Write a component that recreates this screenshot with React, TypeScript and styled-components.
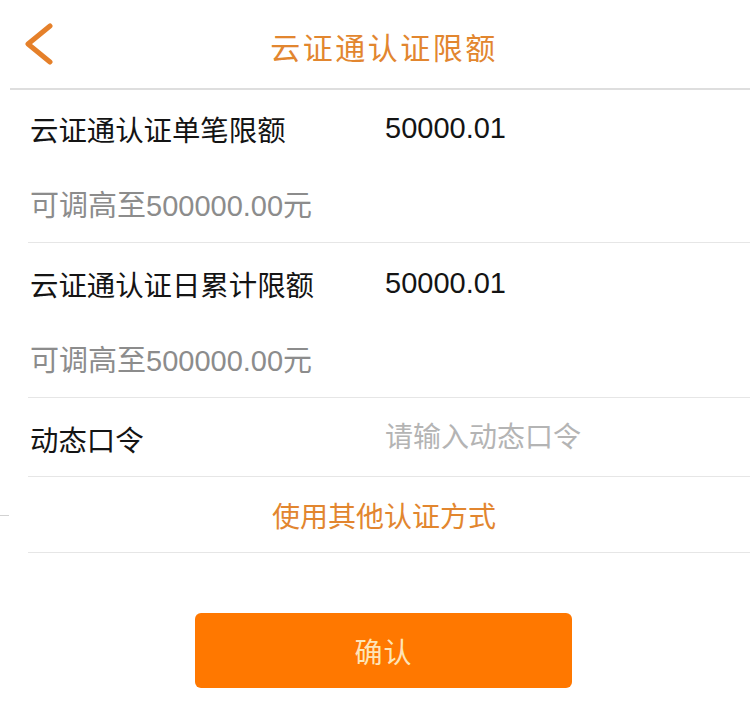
import React from "react";
import styled, { createGlobalStyle } from "styled-components";

const GlobalStyle = createGlobalStyle`
  html, body {
    margin: 0;
    padding: 0;
    background: #ffffff;
  }
  body {
    font-family: "Liberation Sans", "Noto Sans CJK SC", sans-serif;
    -webkit-font-smoothing: antialiased;
  }
  * { box-sizing: border-box; }
`;

const Page = styled.div`
  width: 750px;
  min-height: 716px;
  background: #ffffff;
  display: flex;
  flex-direction: column;
`;

const Header = styled.header`
  margin-left: 10px;
  height: 90px;
  border-bottom: 2px solid #dedede;
  display: grid;
  grid-template-columns: 78px 1fr 70px;
  align-items: center;
`;

const BackButton = styled.button`
  border: none;
  background: none;
  padding: 0 0 0 15px;
  margin: 0;
  display: flex;
  align-items: center;
  height: 100%;
  cursor: pointer;
`;

const Title = styled.h1`
  margin: 0;
  padding-top: 3px;
  text-align: center;
  font-family: "Noto Sans CJK SC", sans-serif;
  font-weight: 400;
  font-size: 30px;
  letter-spacing: 2.5px;
  color: #e2862f;
`;

const LimitSection = styled.section<{ $top?: number }>`
  margin-left: 28px;
  padding: ${(p) => p.$top ?? 18}px 0 16px;
  border-bottom: 1px solid #e6e6e6;
  display: flex;
  flex-direction: column;
  gap: 38px;
`;

const FieldRow = styled.div<{ $height?: number }>`
  display: grid;
  grid-template-columns: 357px 1fr;
  align-items: center;
  height: ${(p) => p.$height ?? 40}px;
`;

const InputRow = styled(FieldRow)`
  margin-left: 28px;
  border-bottom: 1px solid #e6e6e6;
  padding-top: 2px;
`;

const Label = styled.span`
  padding-left: 2px;
  font-size: 28.4px;
  color: #141414;
  white-space: nowrap;
`;

const Value = styled.span`
  font-size: 29px;
  color: #141414;
`;

const Hint = styled.div`
  padding-left: 2px;
  height: 40px;
  line-height: 40px;
  font-size: 29px;
  color: #8c8c8c;
  white-space: nowrap;
`;

const CodeInput = styled.input`
  border: none;
  outline: none;
  background: transparent;
  padding: 0;
  font-family: "Liberation Sans", "Noto Sans CJK SC", sans-serif;
  font-size: 28px;
  color: #141414;
  width: 100%;
  &::placeholder {
    color: #b4b4b4;
  }
`;

const LinkLine = styled.div`
  display: flex;
  align-items: center;
`;

const Tick = styled.span`
  width: 9px;
  height: 1px;
  background: #d2d2d2;
  margin-right: 19px;
  flex: none;
`;

const LinkRow = styled.div`
  flex: 1;
  height: 76px;
  border-bottom: 1px solid #e6e6e6;
  display: flex;
  align-items: center;
  justify-content: center;
  padding-right: 10px;
`;

const AltLink = styled.a`
  font-size: 28px;
  color: #e2862f;
  text-decoration: none;
  cursor: pointer;
`;

const ButtonArea = styled.div`
  margin-top: 60px;
  padding-left: 17px;
  display: flex;
  justify-content: center;
`;

const ConfirmButton = styled.button`
  width: 377px;
  height: 75px;
  border: none;
  border-radius: 6px;
  background: #ff7800;
  color: #fde4b8;
  font-family: "Noto Sans CJK SC", sans-serif;
  font-size: 28px;
  letter-spacing: 1px;
  cursor: pointer;
`;

const limits = [
  { label: "云证通认证单笔限额", value: "50000.01", hint: "可调高至500000.00元", top: 18 },
  { label: "云证通认证日累计限额", value: "50000.01", hint: "可调高至500000.00元", top: 20 },
];

export default function App() {
  return (
    <>
      <GlobalStyle />
      <Page>
        <Header>
          <BackButton aria-label="返回">
            <svg width="30" height="44" viewBox="0 0 30 44" fill="none">
              <polyline
                points="25,4 3,22 25,40"
                stroke="#e5802a"
                strokeWidth="5"
                strokeLinecap="round"
                strokeLinejoin="round"
              />
            </svg>
          </BackButton>
          <Title>云证通认证限额</Title>
          <span />
        </Header>

        {limits.map((item) => (
          <LimitSection key={item.label} $top={item.top}>
            <FieldRow>
              <Label>{item.label}</Label>
              <Value>{item.value}</Value>
            </FieldRow>
            <Hint>{item.hint}</Hint>
          </LimitSection>
        ))}

        <InputRow $height={79}>
          <Label>动态口令</Label>
          <CodeInput placeholder="请输入动态口令" />
        </InputRow>

        <LinkLine>
          <Tick />
          <LinkRow>
            <AltLink>使用其他认证方式</AltLink>
          </LinkRow>
        </LinkLine>

        <ButtonArea>
          <ConfirmButton>确认</ConfirmButton>
        </ButtonArea>
      </Page>
    </>
  );
}
